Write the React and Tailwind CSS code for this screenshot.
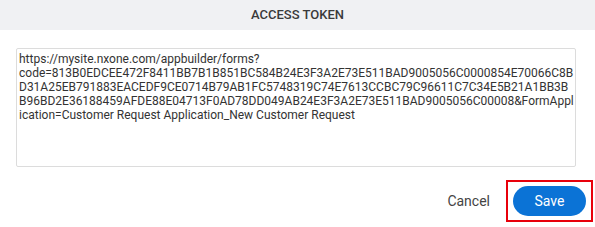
import React from 'react';

const TOKEN_URL =
  'https://mysite.nxone.com/appbuilder/forms?code=813B0EDCEE472F8411BB7B1B851BC584B24E3F3A2E73E511BAD9005056C0000854E70066C8BD31A25EB791883EACEDF9CE0714B79AB1FC5748319C74E7613CCBC79C96611C7C34E5B21A1BB3BB96BD2E36188459AFDE88E04713F0AD78DD049AB24E3F3A2E73E511BAD9005056C00008&FormApplication=Customer Request Application_New Customer Request';

export default function App() {
  return (
    <div className="w-[595px] h-[227px] bg-white font-['Roboto',sans-serif]">
      <div className="h-[30px] bg-[#f0f1f3] flex items-center justify-center">
        <span className="text-[13px] font-medium text-[#3a3a3a]">ACCESS TOKEN</span>
      </div>

      <div className="pt-[18px] pl-[16px] pr-[19px]">
        <textarea
          readOnly
          value={TOKEN_URL}
          className="w-full h-[119px] resize-none border border-[#dcdcdc] rounded-[2px] pl-[2px] pr-0 py-[3px] text-[12px] leading-[14px] text-[#333] outline-none break-words"
        />
      </div>

      <div className="flex items-center justify-end gap-[16px] pr-[2px] pt-[6px]">
        <button className="text-[14px] text-[#444] leading-none">Cancel</button>
        <div className="border-2 border-[#e8000b] px-[5px] py-[4px]">
          <button className="w-[73px] h-[30px] rounded-full bg-[#0b73d6] text-white text-[14px] leading-none">
            Save
          </button>
        </div>
      </div>
    </div>
  );
}
